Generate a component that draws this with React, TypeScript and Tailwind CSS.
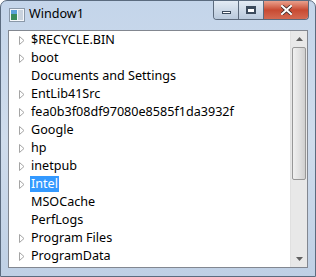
import React from 'react';

const items: { name: string; arrow: boolean; selected?: boolean }[] = [
  { name: '$RECYCLE.BIN', arrow: true },
  { name: 'boot', arrow: true },
  { name: 'Documents and Settings', arrow: false },
  { name: 'EntLib41Src', arrow: true },
  { name: 'fea0b3f08df97080e8585f1da3932f', arrow: true },
  { name: 'Google', arrow: true },
  { name: 'hp', arrow: true },
  { name: 'inetpub', arrow: true },
  { name: 'Intel', arrow: true, selected: true },
  { name: 'MSOCache', arrow: false },
  { name: 'PerfLogs', arrow: false },
  { name: 'Program Files', arrow: true },
  { name: 'ProgramData', arrow: true },
];

function Expander() {
  return (
    <svg width="6" height="9" viewBox="0 0 6 9" className="shrink-0">
      <path d="M0.5 0.5 L5 4.5 L0.5 8.5 Z" fill="#fff" stroke="#a5a5a5" strokeWidth="1" />
    </svg>
  );
}

function AppIcon() {
  return (
    <svg width="16" height="14" viewBox="0 0 16 14">
      <rect x="0.5" y="0.5" width="15" height="13" fill="#f4f7fb" stroke="#8a98a8" />
      <rect x="2" y="2" width="6" height="10" fill="#3a8a5c" />
      <rect x="2" y="2" width="6" height="4" fill="#5aa0d8" />
      <rect x="9" y="2" width="5" height="10" fill="#c9d3de" />
    </svg>
  );
}

function App() {
  return (
    <div
      className="w-[316px] h-[277px] flex flex-col rounded-t-[7px] border border-[#5b6b7f] bg-gradient-to-b from-[#c4d5ea] via-[#cfdcec] to-[#bfd0e5]"
      style={{ fontFamily: '"Noto Sans", "Liberation Sans", sans-serif' }}
    >
      {/* title bar */}
      <div className="h-[28px] flex items-start shrink-0">
        <div className="pl-[8px] pt-[7px]">
          <AppIcon />
        </div>
        <div className="pl-[4px] pt-[5px] text-[12.6px] leading-[16px] text-black">Window1</div>
        <div className="flex-1" />
        <div className="flex mr-[6px] rounded-b-[4px] border border-t-0 border-[#5c6a7c] overflow-hidden h-[19px]">
          <div className="w-[25px] h-full flex items-center justify-center bg-gradient-to-b from-[#e3ebf4] to-[#b9c9dc] border-r border-[#5c6a7c]">
            <div className="w-[9px] h-[3px] bg-white border border-[#3b4a5c] mt-[5px]" />
          </div>
          <div className="w-[25px] h-full flex items-center justify-center bg-gradient-to-b from-[#e3ebf4] to-[#b9c9dc] border-r border-[#5c6a7c]">
            <div className="w-[10px] h-[8px] border-[2px] border-t-[3px] border-[#3b4a5c] bg-white" />
          </div>
          <div className="w-[44px] h-full flex items-center justify-center bg-gradient-to-b from-[#e9a08c] via-[#c84a32] to-[#d46a52]">
            <svg width="11" height="10" viewBox="0 0 11 10">
              <path d="M1 1 L10 9 M10 1 L1 9" stroke="#3b2a28" strokeWidth="3.6" strokeLinecap="square" />
              <path d="M1 1 L10 9 M10 1 L1 9" stroke="#fff" strokeWidth="2" strokeLinecap="square" />
            </svg>
          </div>
        </div>
      </div>
      {/* client */}
      <div className="flex-1 px-[7px] pb-[8px] pt-[1px] flex">
        <div className="flex-1 flex bg-white border border-[#828790]">
          <div className="flex-1 pl-[10px] text-[12.6px] text-black">
            {items.map((it) => (
              <div key={it.name} className="h-[18px] flex items-center">
                <div className="w-[11px] flex items-center">{it.arrow && <Expander />}</div>
                <span
                  className={
                    it.selected
                      ? 'px-[1px] leading-[16px] bg-[#3399ff] text-white whitespace-nowrap'
                      : 'px-[1px] leading-[16px] whitespace-nowrap'
                  }
                >
                  {it.name}
                </span>
              </div>
            ))}
          </div>
          {/* scrollbar */}
          <div className="w-[17px] flex flex-col bg-[#e8e8e8] border-l border-[#e0e0e0]">
            <div className="h-[16px] flex items-center justify-center">
              <svg width="7" height="4" viewBox="0 0 7 4">
                <path d="M0 4 L3.5 0 L7 4 Z" fill="#606060" />
              </svg>
            </div>
            <div className="mx-[1px] h-[133px] rounded-[2px] border border-[#979797] bg-gradient-to-r from-[#f0f0f0] via-[#e2e2e2] to-[#cfcfcf]" />
            <div className="flex-1" />
            <div className="h-[16px] flex items-center justify-center">
              <svg width="7" height="4" viewBox="0 0 7 4">
                <path d="M0 0 L3.5 4 L7 0 Z" fill="#606060" />
              </svg>
            </div>
          </div>
        </div>
      </div>
    </div>
  );
}

export default App;
